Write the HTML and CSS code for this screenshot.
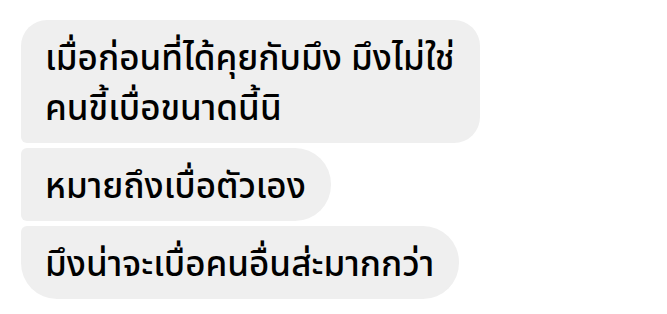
FILE: index.html
```html
<!DOCTYPE html>
<html lang="th">
<head>
    <meta charset="UTF-8">
    <meta name="viewport" content="width=device-width, initial-scale=1.0">
    <title>Chat</title>
    <link rel="stylesheet" href="styles.css">
</head>
<body>

<main class="thread">
    <div class="bubble first">เมื่อก่อนที่ได้คุยกับมึง มึงไม่ใช่<br>คนขี้เบื่อขนาดนี้นิ</div>
    <div class="bubble middle">หมายถึงเบื่อตัวเอง</div>
    <div class="bubble last">มึงน่าจะเบื่อคนอื่นส่ะมากกว่า</div>
</main>

</body>
</html>
```

FILE: styles.css
```css
* {
    padding: 0;
    margin: 0;
    box-sizing: border-box;
}
body {
    background-color: #ffffff;
    font-family: "Noto Sans Thai", "Noto Sans", sans-serif;
    color: #000000;
}
.thread {
    display: flex;
    flex-direction: column;
    align-items: flex-start;
    gap: 5px;
    padding: 20px 0 0 21px;
}
.bubble {
    background-color: #efefef;
    font-size: 35px;
    font-weight: 500;
    line-height: 50px;
    padding: 15px 25px 8px 24px;
    white-space: nowrap;
}
.bubble.first {
    border-radius: 26px 26px 26px 6px;
}
.bubble.middle {
    border-radius: 6px 36px 36px 6px;
}
.bubble.last {
    border-radius: 6px 36px 36px 36px;
}
```
